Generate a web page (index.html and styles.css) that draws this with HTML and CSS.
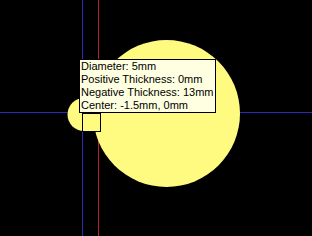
FILE: index.html
```html
<!DOCTYPE html>
<html>
<head>
<meta charset="utf-8">
<link rel="stylesheet" href="styles.css">
</head>
<body>
<div class="view">
  <svg class="canvas" width="312" height="236" viewBox="0 0 312 236" shape-rendering="crispEdges">
    <rect x="0" y="0" width="312" height="236" fill="#000"/>
    <rect x="82" y="0" width="1" height="236" fill="#2a2ab4"/>
    <rect x="98" y="0" width="1" height="236" fill="#b82030"/>
    <rect x="0" y="112" width="312" height="1" fill="#2a2ab4"/>
    <g shape-rendering="auto">
      <circle cx="166.5" cy="113.5" r="73.5" fill="#fffa80"/>
      <circle cx="84" cy="114.5" r="16.5" fill="#fffa80"/>
    </g>
    <rect x="82.5" y="113.5" width="18" height="18" fill="#fffa80" stroke="#000" stroke-width="1"/>
  </svg>
  <div class="tip">
    <div class="line">Diameter: 5mm</div>
    <div class="line">Positive Thickness: 0mm</div>
    <div class="line">Negative Thickness: 13mm</div>
    <div class="line">Center: -1.5mm, 0mm</div>
  </div>
</div>
</body>
</html>
```
FILE: styles.css
```css
html, body {
  margin: 0;
  padding: 0;
  background: #000;
}
.view {
  position: relative;
  width: 312px;
  height: 236px;
  overflow: hidden;
}
.canvas {
  display: block;
}
.tip {
  position: absolute;
  left: 79px;
  top: 59px;
  width: 134px;
  padding: 0 0 0 1px;
  background: #ffffe1;
  border: 1px solid #000;
  font-family: "Liberation Sans", Arial, sans-serif;
  font-size: 11px;
  line-height: 13px;
  color: #000;
}
.line {
  white-space: nowrap;
}
```
